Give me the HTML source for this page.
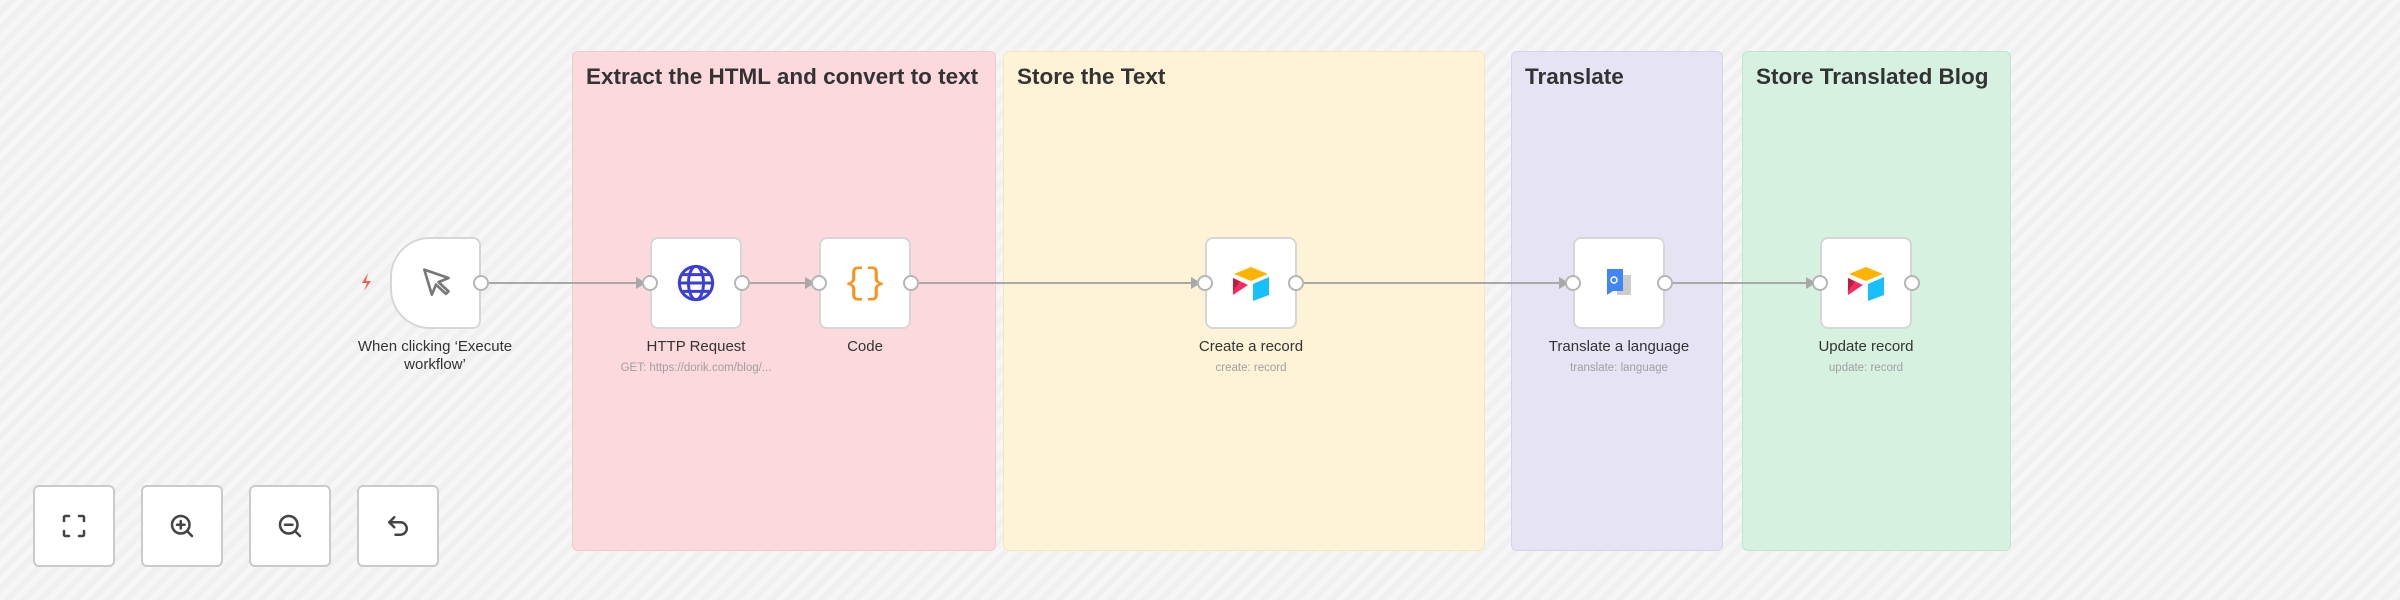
<!DOCTYPE html>
<html><head><meta charset="utf-8"><style>
*{margin:0;padding:0;box-sizing:border-box}
body{width:2400px;height:600px;overflow:hidden;font-family:"Liberation Sans",Arial,sans-serif;
background:#f4f4f4 repeating-linear-gradient(135deg,#f6f6f6 0 6px,#f0f0f0 6px 12px);position:relative}
.g{position:absolute;top:51px;height:500px;border-radius:6px}
.g h2{font-size:22.5px;font-weight:bold;color:#333;margin:12px 0 0 13px;white-space:nowrap}
.n{position:absolute;top:237px;width:92px;height:92px;background:#fff;border:2px solid #d6d6d6;border-radius:8px;display:flex;align-items:center;justify-content:center}
.lb{position:absolute;top:338px;width:220px;text-align:center;font-size:15px;color:#333;line-height:18px}
.sb{position:absolute;top:362px;width:220px;text-align:center;font-size:11.5px;color:#a0a0a0}
.h{position:absolute;width:16px;height:16px;border-radius:50%;background:#fff;border:2px solid #b5b5b5;top:275px}
.b{position:absolute;top:485px;width:82px;height:82px;border:2px solid #cacaca;border-radius:6px;background:#fff;display:flex;align-items:center;justify-content:center}
</style></head><body>
<div class="g" style="left:572px;width:424px;background:#fbd9dc;border:1px solid #f3c8cc"><h2>Extract the HTML and convert to text</h2></div>
<div class="g" style="left:1003px;width:482px;background:#fef3d7;border:1px solid #f5e6bf"><h2>Store the Text</h2></div>
<div class="g" style="left:1511px;width:212px;background:#e6e3f4;border:1px solid #d6d2ec"><h2>Translate</h2></div>
<div class="g" style="left:1742px;width:269px;background:#d7f1e1;border:1px solid #bfe5cf"><h2>Store Translated Blog</h2></div>

<svg width="2400" height="600" style="position:absolute;left:0;top:0">
<g stroke="#a8a8a8" stroke-width="2" fill="#a8a8a8">
<line x1="489" y1="283" x2="636" y2="283"/><polygon points="636,277 646,283 636,289" stroke="none"/>
<line x1="750" y1="283" x2="805" y2="283"/><polygon points="805,277 815,283 805,289" stroke="none"/>
<line x1="919" y1="283" x2="1191" y2="283"/><polygon points="1191,277 1201,283 1191,289" stroke="none"/>
<line x1="1304" y1="283" x2="1559" y2="283"/><polygon points="1559,277 1569,283 1559,289" stroke="none"/>
<line x1="1673" y1="283" x2="1806" y2="283"/><polygon points="1806,277 1816,283 1806,289" stroke="none"/>
</g>
<path d="M368 273 l-6 10 h5 l-3 8 l7 -10 h-5 z" fill="#f0634a"/>
</svg>

<div class="n" style="left:390px;width:91px;border-radius:40px 8px 8px 40px">
<svg width="40" height="40" viewBox="0 0 24 24"><path d="M5 4 L9.5 19 L12 13 L18 18.5 L19.5 17 L13.5 11.5 L19.5 9 Z" fill="none" stroke="#777" stroke-width="1.6" stroke-linejoin="round"/></svg></div>
<div class="n" style="left:650px"><svg width="40" height="40" viewBox="0 0 24 24" fill="none" stroke="#3b3fd8" stroke-width="1.8"><circle cx="12" cy="12" r="10"/><ellipse cx="12" cy="12" rx="4.5" ry="10"/><line x1="2" y1="12" x2="22" y2="12"/><path d="M4 7h16M4 17h16"/></svg></div>
<div class="n" style="left:819px"><span style="font:36px 'Liberation Mono',monospace;color:#f7931e">{}</span></div>
<div class="n" style="left:1205px"><svg width="42" height="36" viewBox="0 0 42 36"><path d="M21 2 L38 9 L21 16 L4 9Z" fill="#fcb400"/><path d="M23 19 L39 12 V30 L23 36Z" fill="#18bfff"/><path d="M3 13 L18 20 L3 30Z" fill="#f82b60"/><path d="M3 13 L10 16.5 L3 26Z" fill="#ba1e45"/></svg></div>
<div class="n" style="left:1573px"><svg width="40" height="40" viewBox="0 0 40 40"><rect x="18" y="12" width="14" height="20" fill="#ccc"/><path d="M8 6 H24 V28 H14 L8 32Z" fill="#4285f4"/><circle cx="15" cy="17" r="3" fill="none" stroke="#fff" stroke-width="1.5"/></svg></div>
<div class="n" style="left:1820px"><svg width="42" height="36" viewBox="0 0 42 36"><path d="M21 2 L38 9 L21 16 L4 9Z" fill="#fcb400"/><path d="M23 19 L39 12 V30 L23 36Z" fill="#18bfff"/><path d="M3 13 L18 20 L3 30Z" fill="#f82b60"/><path d="M3 13 L10 16.5 L3 26Z" fill="#ba1e45"/></svg></div>

<div class="h" style="left:473px"></div>
<div class="h" style="left:642px"></div><div class="h" style="left:734px"></div>
<div class="h" style="left:811px"></div><div class="h" style="left:903px"></div>
<div class="h" style="left:1197px"></div><div class="h" style="left:1288px"></div>
<div class="h" style="left:1565px"></div><div class="h" style="left:1657px"></div>
<div class="h" style="left:1812px"></div><div class="h" style="left:1904px"></div>

<div class="lb" style="left:325px">When clicking ‘Execute workflow’</div>
<div class="lb" style="left:586px">HTTP Request</div><div class="sb" style="left:586px">GET: https://dorik.com/blog/...</div>
<div class="lb" style="left:755px">Code</div>
<div class="lb" style="left:1141px">Create a record</div><div class="sb" style="left:1141px">create: record</div>
<div class="lb" style="left:1509px">Translate a language</div><div class="sb" style="left:1509px">translate: language</div>
<div class="lb" style="left:1756px">Update record</div><div class="sb" style="left:1756px">update: record</div>

<div class="b" style="left:33px"><svg width="30" height="30" viewBox="0 0 24 24" fill="none" stroke="#444" stroke-width="2" stroke-linecap="round"><path d="M4 8V5a1 1 0 0 1 1-1h3M16 4h3a1 1 0 0 1 1 1v3M20 16v3a1 1 0 0 1-1 1h-3M8 20H5a1 1 0 0 1-1-1v-3"/></svg></div>
<div class="b" style="left:141px"><svg width="30" height="30" viewBox="0 0 24 24" fill="none" stroke="#444" stroke-width="2" stroke-linecap="round"><circle cx="11" cy="11" r="7"/><path d="M16 16l4 4M11 8v6M8 11h6"/></svg></div>
<div class="b" style="left:249px"><svg width="30" height="30" viewBox="0 0 24 24" fill="none" stroke="#444" stroke-width="2" stroke-linecap="round"><circle cx="11" cy="11" r="7"/><path d="M16 16l4 4M8 11h6"/></svg></div>
<div class="b" style="left:357px"><svg width="30" height="30" viewBox="0 0 24 24" fill="none" stroke="#444" stroke-width="2" stroke-linecap="round" stroke-linejoin="round"><path d="M9 5L5 9l4 4"/><path d="M5 9h9a5 5 0 0 1 0 10h-4"/></svg></div>
</body></html>
